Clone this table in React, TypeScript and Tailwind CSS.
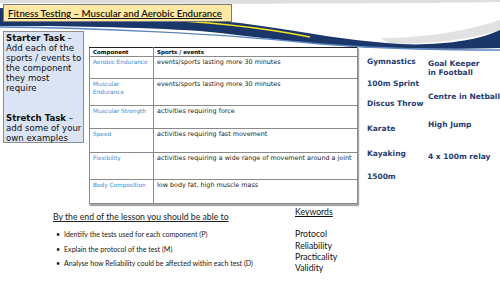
const ROWS = [
  { name: "Aerobic Endurance", text: "events/sports lasting more 30 minutes", h: "h-[22px]" },
  { name: "Muscular Endurance", text: "events/sports lasting more 30 minutes", h: "h-[27px]" },
  { name: "Muscular Strength", text: "activities requiring force", h: "h-[23px]" },
  { name: "Speed", text: "activities requiring fast movement", h: "h-[24px]" },
  { name: "Flexibility", text: "activities requiring a wide range of movement around a joint", h: "h-[27px]" },
  { name: "Body Composition", text: "low body fat, high muscle mass", h: "h-[24px]" },
];

const OUTCOMES = [
  "Identify the tests used for each component (P)",
  "Explain the protocol of the test (M)",
  "Analyse how Reliability could be affected within each test (D)",
];

const KEYWORDS = ["Protocol", "Reliability", "Practicality", "Validity"];

function Swoosh() {
  return (
    <svg className="absolute left-0 top-0" width="500" height="60" viewBox="0 0 500 60" aria-hidden>
      <path d="M0,0 H500 V2 C380,4 200,4 0,3 Z" fill="#dedede" />
      <path d="M380,38 C430,38 470,30 500,20 L500,30 C470,40 430,44 390,44 Z" fill="#d4d4d4" opacity="0.7" />
      <path
        d="M0,8 C120,14 200,19 240,23 C300,31 340,40 400,44 C440,46 480,40 500,30 L500,48 C470,49 430,49 380,48 C320,46 260,37 200,31 C140,27 60,26 0,26 Z"
        fill="#1b3668"
      />
      <path d="M0,27 C100,28 220,34 300,42 C360,48 430,50 500,50" fill="none" stroke="#5b86c2" strokeWidth="1.5" />
      <path d="M140,19 C200,21 260,27 310,37" fill="none" stroke="#f3e01c" strokeWidth="1.6" />
    </svg>
  );
}

export default function App() {
  return (
    <div className="relative h-[281px] w-[500px] overflow-hidden bg-white">
      <Swoosh />
      <div className="relative">
        <div className="ml-[3px] mt-[4px] flex h-[18px] w-[229px] items-center border border-[#7a7a7a] bg-[#ffe8a3] pl-[4px]">
          <span className="whitespace-nowrap font-['Lato',sans-serif] text-[9.7px] font-semibold text-[#111] underline underline-offset-[1px]">
            Fitness Testing – Muscular and Aerobic Endurance
          </span>
        </div>

        <div className="mt-[9px] flex">
          <div className="ml-[3px] h-[112px] w-[81px] whitespace-nowrap border border-[#8c8c8c] bg-[#dbe4f4] pl-[2px] pt-[1px] font-['DejaVu_Sans',sans-serif] text-[8.6px] leading-[10px] text-[#111]">
            <p>
              <b>Starter Task</b> –
            </p>
            <p>
              Add each of the
              <br />
              sports / events to
              <br />
              the component
              <br />
              they most
              <br />
              require
            </p>
            <p className="mt-[20px]">
              <b>Stretch Task</b> –
            </p>
            <p>
              add some of your
              <br />
              own examples
            </p>
          </div>

          <div className="ml-[5px] mt-[16px] w-[269px] shadow-[1px_2px_1px_rgba(0,0,0,0.35)]">
            <table className="w-full border-collapse font-['DejaVu_Sans',sans-serif] leading-[8px]">
              <thead>
                <tr className="h-[9px]">
                  <th className="w-[64px] border border-[#8a8a8a] border-t-[#222] px-[3px] text-left text-[5.5px] font-bold">Component</th>
                  <th className="border border-[#8a8a8a] border-t-[#222] px-[3px] text-left text-[5.5px] font-bold">Sports / events</th>
                </tr>
              </thead>
              <tbody>
                {ROWS.map((r) => (
                  <tr key={r.name} className={r.h}>
                    <td className="border border-[#8a8a8a] px-[3px] pt-[1px] align-top text-[5.8px] text-[#3a8ad6]">{r.name}</td>
                    <td className="border border-[#8a8a8a] px-[3px] pt-[1px] align-top text-[6.4px] text-[#222]">{r.text}</td>
                  </tr>
                ))}
              </tbody>
            </table>
          </div>

          <div className="ml-[9px] mt-[26px] flex font-['DejaVu_Sans',sans-serif] text-[7.5px] font-bold leading-[9px] text-[#1f3b73]">
            <div className="flex w-[61px] flex-col">
              <span>Gymnastics</span>
              <span className="mt-[13px]">100m Sprint</span>
              <span className="mt-[11px]">Discus Throw</span>
              <span className="mt-[16px]">Karate</span>
              <span className="mt-[16px]">Kayaking</span>
              <span className="mt-[14px]">1500m</span>
            </div>
            <div className="mt-[2px] flex flex-col">
              <span>Goal Keeper</span>
              <span>in Football</span>
              <span className="mt-[15px]">Centre in Netball</span>
              <span className="mt-[19px]">High Jump</span>
              <span className="mt-[23px]">4 x 100m relay</span>
            </div>
          </div>
        </div>

        <div className="flex">
          <div className="ml-[53px] mt-[7px] w-[240px] font-['Lato',sans-serif]">
            <p className="text-[8.7px] leading-[12px] text-[#222] underline underline-offset-[1px]">
              By the end of the lesson you should be able to
            </p>
            <ul className="mt-[8px] flex flex-col gap-[6px] text-[7.1px] leading-[8.5px] text-[#222]">
              {OUTCOMES.map((o) => (
                <li key={o} className="flex">
                  <span className="ml-[3px] w-[8px]">•</span>
                  <span>{o}</span>
                </li>
              ))}
            </ul>
          </div>
          <div className="ml-[2px] mt-[2px] font-['Lato',sans-serif] text-[8.7px] leading-[11.3px] text-[#111]">
            <p className="underline underline-offset-[1px]">Keywords</p>
            <div className="mt-[11px] flex flex-col">
              {KEYWORDS.map((k) => (
                <span key={k}>{k}</span>
              ))}
            </div>
          </div>
        </div>
      </div>
    </div>
  );
}
